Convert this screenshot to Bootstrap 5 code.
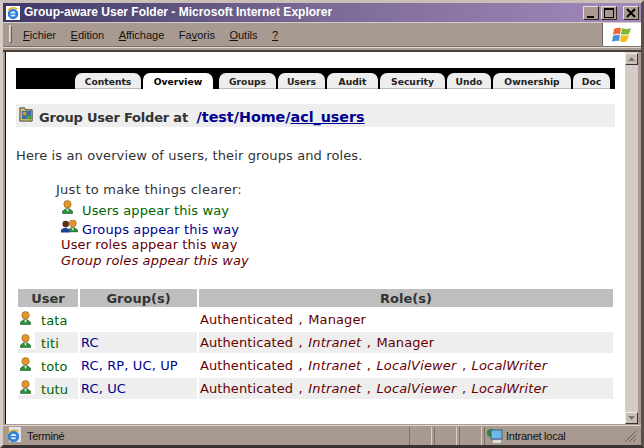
<!DOCTYPE html>
<html lang="en"><head><meta charset="utf-8"><title>Group-aware User Folder</title>
<link href="https://cdn.jsdelivr.net/npm/bootstrap@5.3.0/dist/css/bootstrap.min.css" rel="stylesheet">
<style>
html,body{height:100%;overflow:hidden}
body{background:#a89a90;font-family:"DejaVu Sans",sans-serif;font-size:13px;line-height:16px;color:#333}
.win{height:448px;border:3px solid #c9bfb7;border-right-color:#5a4f48;border-bottom-color:#3a322e;border-left-color:#d4ccc6}
.ttl{height:19px;flex:none;background:linear-gradient(90deg,#3f3866,#7a6a96 50%,#a488bc);color:#fff;font:bold 12px/19px "Liberation Sans",sans-serif;padding-left:2px;gap:3px}
.winbtns{gap:2px;margin-left:auto;padding-right:2px}
.wbtn{width:16px;height:14px;background:#a89a90;border:1px solid;border-color:#e6e0da #2e2824 #2e2824 #e6e0da;display:flex}
.strip{height:1px;flex:none;background:#d4ccc6}
.menuz{height:24px;flex:none;font:11px/24px "Liberation Sans",sans-serif;color:#111;padding-left:3px;border-bottom:1px solid #7c7068}
.grip{width:3px;height:18px;background:#c9bfb7;border:1px solid;border-color:#e6e0da #6a5f58 #6a5f58 #e6e0da;margin:2px 11px 0 3px;flex:none}
.menuz .itm{flex:none;margin-right:14.5px}
.flag{margin-left:auto;width:39px;height:23px;background:#fff;border-left:1px solid #6a5f58;display:flex;align-items:center;justify-content:center}
.sep{height:5px;flex:none;background:#a89a90;border-top:1px solid #e0d9d2;border-bottom:2px solid #4a403a}
.vp{flex:1 1 auto;min-height:0;margin:0 3px 0 2px;border-left:1px solid #111}
.pg{flex:1 1 auto;background:#fff;padding:16px 10px 0 10px;min-width:0;letter-spacing:.12px}
.sb{width:13px;flex:none;background:#d4ccc6;padding-top:1px}
.sbb{height:12px;width:13px;background:#c9bfb7;border:1px solid;border-color:#f0ebe6 #333 #333 #f0ebe6;display:flex;align-items:center;justify-content:center}
.tabbar{background:#000;height:21px;width:599px;padding:5px 0 0 59px;gap:2px;letter-spacing:0}
.tb{background:#eee;border-bottom:1px solid #bbb;border-radius:7px 7px 0 0;font:bold 9.2px/17px "DejaVu Sans",sans-serif;color:#222;text-align:center;height:16px;flex:none}
.tb.on{background:#fff;border-bottom-color:#fff;color:#000}
.hd{background:#eee;width:599px;height:23px;margin-top:15px;padding:3px;font-weight:bold;font-size:13px;line-height:19px;color:#333;letter-spacing:-.2px}
.hd .hdt{margin:1px 0 0 5px}
.hd a{color:#000090;text-decoration:none;font-size:14.3px;letter-spacing:0}.hd a.u{text-decoration:underline}
.intro{margin:21px 0 0}
.lgd{margin:18px 0 0 40px;height:93px}
.lgd .just{letter-spacing:.26px}
.lgd .rw{margin-left:5px;height:16px}
.lgd .rw1{margin-top:5px}
.lgd .rw2{margin-top:3px;height:15px}
.lgd .ic1{margin:-3px 9px 0 1px}
.lgd .ic2{margin:-3px 4px 0 0}
.ug{color:#006400}.gb{color:#000090}.rl{color:#600}.grl{color:#600;font-style:italic;letter-spacing:.15px}
table.tbx{border-collapse:separate;border-spacing:2px;width:599px;margin:12px 0 0;table-layout:fixed;color:#600}
table.tbx th{background:#bebebe;color:#333;text-align:center;font-size:13px;line-height:16px;height:18px;padding:0;border:0;box-shadow:none;letter-spacing:0}
table.tbx td{height:21px;padding:0 1px;border:0;box-shadow:none;vertical-align:top;line-height:18px;background:#fff;color:inherit}
table.tbx tr.alt td{background:#eee}
table.tbx td.r{padding-top:2px;letter-spacing:.1px;word-spacing:1.2px}
table.tbx td.r i{letter-spacing:.15px}
table.tbx td.g{color:#000090;padding-top:2px}
table.tbx td.u{padding:0}
.ib{display:block;width:17px;height:17px;padding:2px 0 0 2px;background:#fff;flex:none}
.ib svg{display:block}
.nm{color:#006400;margin:4px 0 0 6px;line-height:16px}
.stat{height:20px;flex:none;font:11px/20px "Liberation Sans",sans-serif;letter-spacing:-.25px;color:#111;border-top:1px solid #e0d9d2;margin-top:1px;padding-left:3px}
.stat .me-1{margin-right:5px!important}
.pn{border-left:1px solid #7c7068;border-right:1px solid #d9d2cb;height:18px;width:23px;flex:none;margin-right:2px}
.zone{width:157px;border-left:1px solid #7c7068;height:18px;flex:none;padding-left:2px;gap:3px}
.zone,.pn{margin-top:1px}
</style></head><body>
<svg width="0" height="0" class="d-none"><defs>
<symbol id="usr" viewBox="1 .5 12 15"><path d="M1.500 15v-2.500L5 10h4l3.500 2.500V15z" fill="#2f8f3a" stroke="#1c5a22" stroke-width=".7"/><path d="M5.500 10.500 7 13.500l1.500-3z" fill="#e8f0e0"/><circle cx="7" cy="5" r="4" fill="#e2962f" stroke="#9a5f14" stroke-width=".7"/></symbol>
<symbol id="ie" viewBox="0 0 16 16"><circle cx="8" cy="9" r="6" fill="#2f7fd8"/><circle cx="8" cy="9" r="3" fill="#dfeeff"/><path d="M5 8.500h6.500V10H5z" fill="#2f7fd8"/><path d="M2 4Q8-1 14 3L12 4Q7 1 3 6z" fill="#e8b020"/></symbol>
</defs></svg>
<div class="win d-flex flex-column">
 <div class="ttl d-flex align-items-center">
  <svg width="16" height="16"><rect x="1" y="1" width="14" height="14" fill="#fff"/><use href="#ie" width="14" height="14" x="1" y="1"/></svg>
  <span>Group-aware User Folder - Microsoft Internet Explorer</span>
  <div class="winbtns d-flex">
   <span class="wbtn"><svg width="14" height="12"><rect x="3" y="9" width="7" height="2" fill="#000"/></svg></span>
   <span class="wbtn"><svg width="14" height="12"><rect x="2.500" y="1.500" width="9" height="9" fill="none" stroke="#000"/><rect x="2" y="1" width="10" height="2"/></svg></span>
   <span class="wbtn ms-1"><svg width="14" height="12"><path d="M3 2l8 8M11 2l-8 8" stroke="#000" stroke-width="2"/></svg></span>
  </div>
 </div>
 <div class="strip"></div>
 <div class="menuz d-flex">
  <span class="grip"></span>
  <span class="itm"><u>F</u>ichier</span>
  <span class="itm"><u>E</u>dition</span>
  <span class="itm"><u>A</u>ffichage</span>
  <span class="itm">Fa<u>v</u>oris</span>
  <span class="itm"><u>O</u>utils</span>
  <span class="itm"><u>?</u></span>
  <span class="flag"><svg width="20" height="18" viewBox="0 0 20 18"><path d="M2 3Q5 1 9 2L8 8Q5 7 1 9z" fill="#e8683a"/><path d="M10 2Q14 4 19 2L17 8Q13 9 9 8z" fill="#7cb83a"/><path d="M1 10Q5 8 8 9L7 15Q4 14 0 16z" fill="#4a90d8"/><path d="M9 9Q13 10 17 9L15 15Q11 17 8 15z" fill="#f0c020"/></svg></span>
 </div>
 <div class="sep"></div>
 <div class="vp d-flex">
  <div class="pg">
   <ul class="tabbar d-flex list-unstyled mb-0">
    <li class="tb" style="width:66px">Contents</li>
    <li class="tb on" style="width:70px">Overview</li>
    <li class="tb ms-1" style="width:57px">Groups</li>
    <li class="tb" style="width:47px">Users</li>
    <li class="tb" style="width:51px">Audit</li>
    <li class="tb" style="width:65px">Security</li>
    <li class="tb" style="width:44px">Undo</li>
    <li class="tb" style="width:78px">Ownership</li>
    <li class="tb" style="width:37px">Doc</li>
   </ul>
   <div class="hd d-flex"><svg width="15" height="15" viewBox="0 0 16 16" class="flex-none"><path d="M1 1h5l1 2h7v12H1z" fill="#e8d060" stroke="#333"/><rect x="3" y="4" width="10" height="9" fill="#3a6ab0"/><circle cx="6" cy="7" r="2" fill="#e2962f"/><rect x="8" y="9" width="5" height="4" fill="#4a9a40"/></svg><span class="hdt">Group User Folder at&nbsp;&nbsp;<a href="#">/test/Home/</a><a class="u" href="#">acl_users</a></span></div>
   <p class="intro">Here is an overview of users, their groups and roles.</p>
   <div class="lgd">
    <div class="just">Just to make things clearer:</div>
    <div class="rw rw1 d-flex ug"><svg width="11" height="14" class="flex-none ic1"><use href="#usr"/></svg><span>Users appear this way</span></div>
    <div class="rw rw2 d-flex gb"><svg width="17" height="14" viewBox="0 0 18 14" class="flex-none ic2"><g transform="translate(7)"><use href="#usr" width="11" height="14"/></g><path d="M0 14v-3l3-2h3l3 2v3z" fill="#1f3f9a"/><circle cx="5" cy="5" r="3.500" fill="#5a3018"/></svg><span>Groups appear this way</span></div>
    <div class="rw rl">User roles appear this way</div>
    <div class="rw grl">Group roles appear this way</div>
   </div>
   <table class="table tbx mb-0">
    <colgroup><col style="width:60px"><col style="width:117px"><col></colgroup>
    <thead><tr><th>User</th><th>Group(s)</th><th>Role(s)</th></tr></thead>
    <tbody>
     <tr><td class="u"><div class="d-flex"><span class="ib"><svg width="11" height="14"><use href="#usr"/></svg></span><span class="nm">tata</span></div></td><td class="g"></td><td class="r">Authenticated , Manager</td></tr>
     <tr class="alt"><td class="u"><div class="d-flex"><span class="ib"><svg width="11" height="14"><use href="#usr"/></svg></span><span class="nm">titi</span></div></td><td class="g">RC</td><td class="r">Authenticated , <i>Intranet</i> , Manager</td></tr>
     <tr><td class="u"><div class="d-flex"><span class="ib"><svg width="11" height="14"><use href="#usr"/></svg></span><span class="nm">toto</span></div></td><td class="g">RC, RP, UC, UP</td><td class="r">Authenticated , <i>Intranet</i> , <i>LocalViewer</i> , <i>LocalWriter</i></td></tr>
     <tr class="alt"><td class="u"><div class="d-flex"><span class="ib"><svg width="11" height="14"><use href="#usr"/></svg></span><span class="nm">tutu</span></div></td><td class="g">RC, UC</td><td class="r">Authenticated , <i>Intranet</i> , <i>LocalViewer</i> , <i>LocalWriter</i></td></tr>
    </tbody>
   </table>
  </div>
  <div class="sb d-flex flex-column justify-content-between">
   <span class="sbb"><svg width="7" height="4"><path d="M3.500 0 7 4H0z" fill="#777"/></svg></span>
   <span class="sbb"><svg width="7" height="4"><path d="M0 0h7L3.500 4z" fill="#777"/></svg></span>
  </div>
 </div>
 <div class="stat d-flex">
  <svg width="16" height="18" class="me-1 flex-none"><rect x="3" y="1" width="12" height="15" fill="#dfe6f0"/><use href="#ie" width="15" height="15" y="2"/></svg>
  <span class="flex-grow-1">Terminé</span>
  <span class="pn"></span><span class="pn"></span><span class="pn"></span>
  <span class="zone d-flex align-items-center">
   <svg width="16" height="16" viewBox="0 0 16 16" class="flex-none"><circle cx="4" cy="5" r="4" fill="#2a8a3a"/><rect x="4" y="2" width="11" height="9" fill="#6fb8ea" stroke="#35628a"/><rect x="6" y="12" width="8" height="3" fill="#ddd"/></svg>
   <span>Intranet local</span>
   <svg width="12" height="12" class="ms-auto me-1 flex-none"><path d="M12 1 1 12M12 5 5 12M12 9 9 12" stroke="#6a5f58"/></svg>
  </span>
 </div>
</div>
</body></html>
